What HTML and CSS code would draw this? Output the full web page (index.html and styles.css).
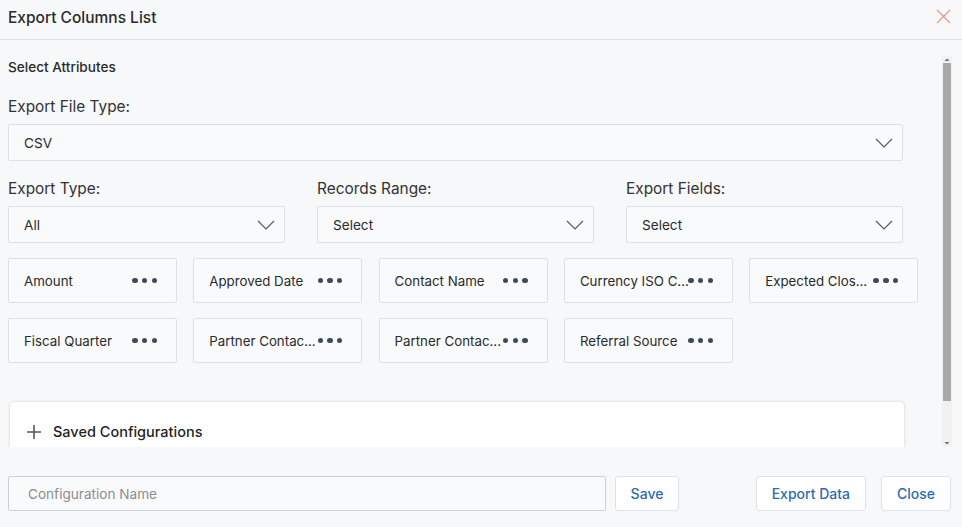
FILE: index.html
```html
<!DOCTYPE html>
<html lang="en">
<head>
<meta charset="utf-8">
<title>Export Columns List</title>
<link rel="stylesheet" href="styles.css">
</head>
<body>
<div class="modal">
  <header class="modal-header">
    <h1 class="modal-title">Export Columns List</h1>
    <button class="close-x" aria-label="Close">
      <svg width="15" height="15" viewBox="0 0 15 15"><path d="M1 1L14 14M14 1L1 14" stroke="#ef8f8f" stroke-width="1.1" fill="none"/></svg>
    </button>
  </header>
  <div class="modal-body">
    <div class="scroll-area">
      <div class="content">
        <div class="section-title">Select Attributes</div>
        <label class="field-label first">Export File Type:</label>
        <div class="select">
          <span>CSV</span>
          <svg class="chev" width="18" height="10" viewBox="0 0 18 10"><path d="M1 1L9 9L17 1" stroke="#5a5a5a" stroke-width="1.2" fill="none"/></svg>
        </div>
        <div class="row">
          <div class="col">
            <label class="field-label">Export Type:</label>
            <div class="select">
              <span>All</span>
              <svg class="chev" width="18" height="10" viewBox="0 0 18 10"><path d="M1 1L9 9L17 1" stroke="#5a5a5a" stroke-width="1.2" fill="none"/></svg>
            </div>
          </div>
          <div class="col">
            <label class="field-label">Records Range:</label>
            <div class="select">
              <span>Select</span>
              <svg class="chev" width="18" height="10" viewBox="0 0 18 10"><path d="M1 1L9 9L17 1" stroke="#5a5a5a" stroke-width="1.2" fill="none"/></svg>
            </div>
          </div>
          <div class="col">
            <label class="field-label">Export Fields:</label>
            <div class="select">
              <span>Select</span>
              <svg class="chev" width="18" height="10" viewBox="0 0 18 10"><path d="M1 1L9 9L17 1" stroke="#5a5a5a" stroke-width="1.2" fill="none"/></svg>
            </div>
          </div>
        </div>
        <div class="chips">
          <div class="chip"><span class="chip-text">Amount</span><span class="dots"><i></i><i></i><i></i></span></div>
          <div class="chip"><span class="chip-text">Approved Date</span><span class="dots"><i></i><i></i><i></i></span></div>
          <div class="chip"><span class="chip-text">Contact Name</span><span class="dots"><i></i><i></i><i></i></span></div>
          <div class="chip"><span class="chip-text">Currency ISO C...</span><span class="dots"><i></i><i></i><i></i></span></div>
          <div class="chip"><span class="chip-text">Expected Clos...</span><span class="dots"><i></i><i></i><i></i></span></div>
          <div class="chip"><span class="chip-text">Fiscal Quarter</span><span class="dots"><i></i><i></i><i></i></span></div>
          <div class="chip"><span class="chip-text">Partner Contac...</span><span class="dots"><i></i><i></i><i></i></span></div>
          <div class="chip"><span class="chip-text">Partner Contac...</span><span class="dots"><i></i><i></i><i></i></span></div>
          <div class="chip"><span class="chip-text">Referral Source</span><span class="dots"><i></i><i></i><i></i></span></div>
        </div>
        <div class="card">
          <svg class="plus" width="14" height="14" viewBox="0 0 14 14"><path d="M7 0V14M0 7H14" stroke="#555" stroke-width="1.6" fill="none"/></svg>
          <span class="card-title">Saved Configurations</span>
        </div>
      </div>
    </div>
    <div class="scrollbar" aria-hidden="true">
      <svg class="sb-arrow" width="10" height="7" viewBox="0 0 10 7"><path d="M2.5 5L5 2.5L7.5 5Z" fill="#6f6f6f"/></svg>
      <div class="sb-thumb"></div>
      <div class="sb-rest"></div>
      <svg class="sb-arrow" width="10" height="7" viewBox="0 0 10 7"><path d="M2.5 2L5 4.5L7.5 2Z" fill="#6f6f6f"/></svg>
    </div>
  </div>
  <footer class="modal-footer">
    <input class="config-input" type="text" placeholder="Configuration Name">
    <button class="btn save">Save</button>
    <div class="spacer"></div>
    <button class="btn">Export Data</button>
    <button class="btn">Close</button>
  </footer>
</div>
</body>
</html>
```

FILE: styles.css
```css
* { box-sizing: border-box; }
html, body {
  margin: 0;
  padding: 0;
  background: #f7f8fa;
  font-family: Inter, "Noto Sans", sans-serif;
  color: #2b2b2b;
}
.modal {
  width: 962px;
  height: 527px;
  display: flex;
  flex-direction: column;
  background: #f7f8fa;
}
.modal-header {
  height: 40px;
  flex: none;
  display: flex;
  align-items: center;
  justify-content: space-between;
  padding: 0 11px 0 8px;
  border-bottom: 1px solid #dde1e8;
}
.modal-title {
  margin: 0;
  font-size: 15.5px;
  font-weight: 500;
  color: #2a2a2a;
  line-height: 20px;
  padding-bottom: 4px;
}
.close-x {
  border: 0;
  background: none;
  padding: 0;
  width: 15px;
  height: 15px;
  margin-bottom: 6px;
  display: flex;
}
.modal-body {
  flex: 1;
  padding: 16px 10px 0 8px;
  min-height: 0;
  display: flex;
}
.scroll-area {
  flex: 1;
  overflow: hidden;
  height: 391px;
}
.scrollbar {
  width: 10px;
  height: 391px;
  flex: none;
  display: flex;
  flex-direction: column;
  background: #f1f1f1;
}
.sb-arrow { flex: none; display: block; }
.sb-thumb {
  height: 338px;
  background: #a8a8a8;
  margin: 0 1px 0 1px;
}
.sb-rest { flex: 1; }
.content {
  width: 897px;
  padding-top: 1px;
  padding-bottom: 20px;
}
.section-title {
  font-size: 13.6px;
  font-weight: 500;
  line-height: 20px;
  color: #2b2b2b;
}
.field-label {
  display: block;
  font-size: 15.4px;
  line-height: 20px;
  color: #333;
  margin-top: 18px;
  margin-bottom: 7px;
}
.field-label.first { margin-top: 20px; }
.select {
  width: 895px;
  height: 37px;
  border: 1px solid #dce1e9;
  border-radius: 2px;
  display: flex;
  align-items: center;
  justify-content: space-between;
  padding: 0 9px 0 15px;
  font-size: 13.6px;
  color: #2b2b2b;
  background: #f9fafc;
}
.row {
  display: flex;
  gap: 32px;
  width: 895px;
}
.col { width: 277px; }
.col .select { width: 277px; }
.chips {
  display: flex;
  flex-wrap: wrap;
  column-gap: 16.3px;
  row-gap: 15px;
  margin-top: 15px;
  width: 920px;
}
.chip {
  width: 169px;
  height: 45px;
  border: 1px solid #dce1e9;
  border-radius: 2px;
  display: flex;
  align-items: center;
  padding: 0 19px 0 15px;
  background: #f9fafc;
}
.chip-text {
  flex: 1;
  min-width: 0;
  font-size: 13.3px;
  color: #2b2b2b;
  white-space: nowrap;
  overflow: hidden;
}
.dots {
  flex: none;
  display: flex;
  gap: 4.3px;
}
.dots i {
  width: 5.4px;
  height: 5.4px;
  border-radius: 50%;
  background: #3e4a5c;
}
.card {
  margin: 39px 0 0 2px;
  width: 894px;
  height: 72px;
  background: #fff;
  border-radius: 4px;
  box-shadow: 0 0 3px rgba(0,0,0,0.18);
  display: flex;
  align-items: flex-start;
  padding: 20px 17px;
  gap: 12px;
}
.plus { margin-top: 3px; }
.card-title {
  font-size: 14.5px;
  font-weight: 500;
  line-height: 20px;
  color: #1f1f1f;
}
.modal-footer {
  height: 80px;
  flex: none;
  display: flex;
  align-items: flex-start;
  padding: 29px 11px 0 8px;
}
.config-input {
  width: 598px;
  height: 35px;
  border: 1px solid #c9d0da;
  border-radius: 2px;
  padding: 0 19px;
  font-family: inherit;
  font-size: 13.6px;
  background: #f9fafc;
  color: #333;
}
.config-input::placeholder { color: #8c8c8c; }
.btn {
  height: 35px;
  border: 1px solid #dce1e9;
  border-radius: 3px;
  background: #fff;
  color: #2c6cb0;
  font-family: inherit;
  font-size: 14px;
  font-weight: 500;
  padding: 0 15px;
  margin-left: 15px;
}
.save { margin-left: 9px; width: 64px; padding: 0; }
.spacer { flex: 1; }
```
